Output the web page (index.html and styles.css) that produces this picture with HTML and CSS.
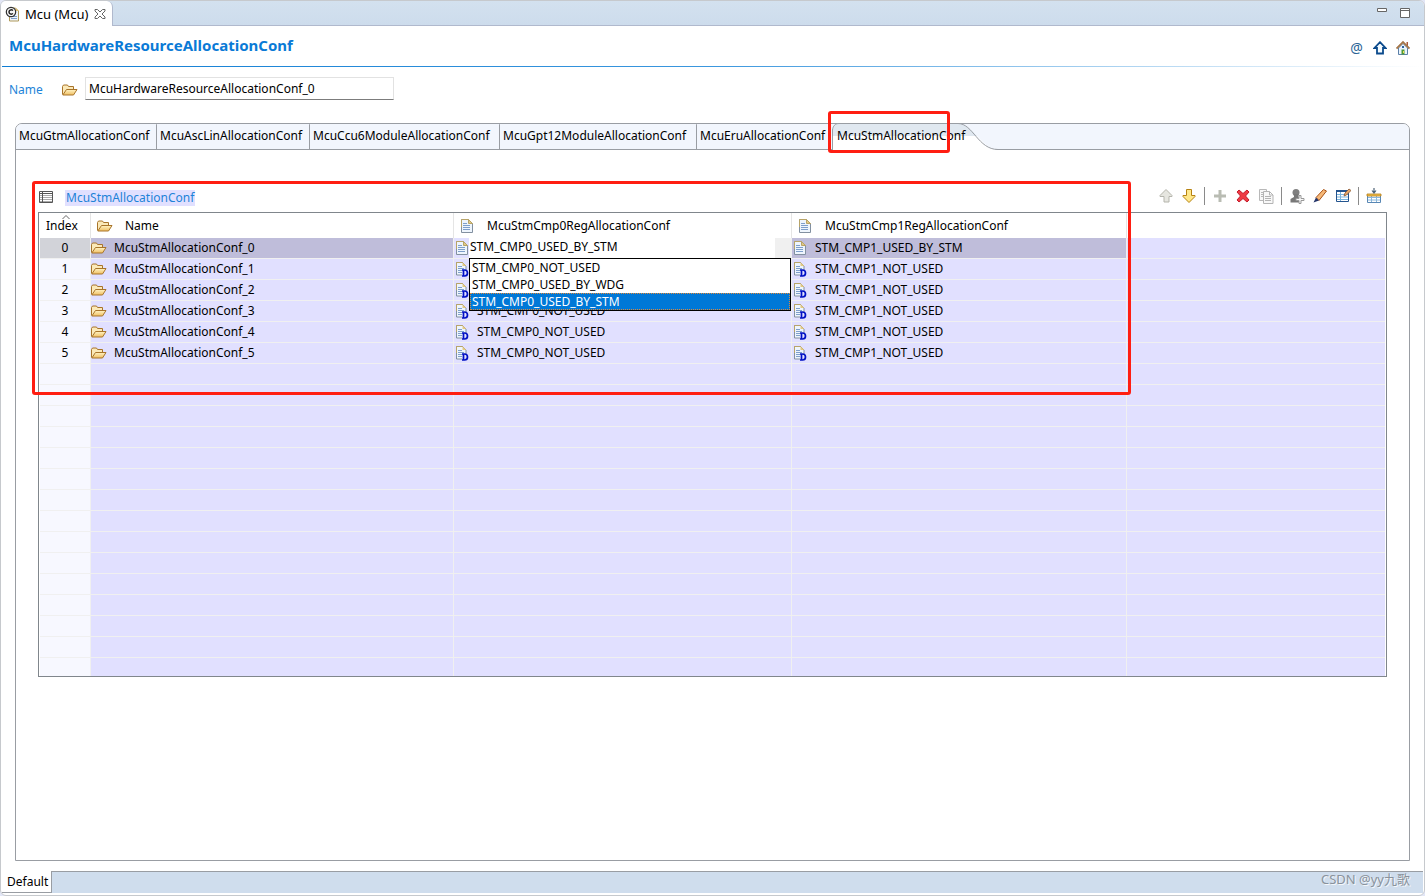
FILE: index.html
```html
<!DOCTYPE html>
<html lang="en">
<head>
<meta charset="utf-8">
<title>Mcu (Mcu)</title>
<link rel="stylesheet" href="styles.css">
</head>
<body>
<svg class="defs" aria-hidden="true">
  <defs>
    <linearGradient id="gold" x1="0" y1="0" x2="0" y2="1"><stop offset="0" stop-color="#fff3c4"/><stop offset="1" stop-color="#f0bf62"/></linearGradient>
    <symbol id="folder" viewBox="0 0 16 14">
      <path d="M.5 11.500V3.500l1-1.500h4l1 1.500h5v3" fill="#fbe9b8" stroke="#a8742a"/>
      <path d="M.8 12L4.500 6.500h10.500L11.500 12z" fill="url(#gold)" stroke="#a8742a"/>
    </symbol>
    <symbol id="doc" viewBox="0 0 12 14">
      <path d="M.5.5h7l4 4v9H.5z" fill="#eef5fd" stroke="#8290a0"/>
      <path d="M.5 8V.5h7l4 4" fill="none" stroke="#b8a468"/>
      <path d="M7.500.5v4h4z" fill="#e2c986" stroke="#b8a468"/>
      <path d="M2 4.500h4M2 6.500h7M2 8.500h7M2 10.500h7" stroke="#7e9fcb"/>
    </symbol>
    <symbol id="docd" viewBox="0 0 14 16">
      <path d="M.5.5h6l3.500 3.500v9H.5z" fill="#eef5fd" stroke="#8290a0"/>
      <path d="M.5 7V.5h6l3.500 3.500" fill="none" stroke="#b8a468"/>
      <path d="M6.500.5v3.500H10z" fill="#e2c986"/>
      <path d="M2 4.500h4M2 6.500h6M2 8.500h4M2 10.500h4" stroke="#7e9fcb"/>
      <path d="M6 8h2.500c2.300 0 3 1.300 3 3s-1 3-3 3H6M7.500 8v6" fill="#e2e1ff" stroke="#0010c4" stroke-width="1.700"/>
    </symbol>
  </defs>
</svg>
<div class="window">
  <header class="titlebar">
    <div class="editor-tab">
      <svg class="i16" viewBox="0 0 16 16"><path d="M4.500 5v10h9V5l-3-3h-6z" fill="#eef4fc" stroke="#b09a5a"/><path d="M10.500 2v3h3z" fill="#dfba64"/><path d="M6 10.500h6M6 12.500h6" stroke="#7e9fcb"/><circle cx="6" cy="6" r="4.700" fill="#f4f4f4" stroke="#333" stroke-width="1.200"/><path d="M8 4.500C6 3 4 4.500 4 6s2 3 4 1.500" fill="none" stroke="#222" stroke-width="1.500"/></svg>
      <span>Mcu (Mcu)</span>
      <button class="plain" aria-label="Close"><svg width="12" height="12" viewBox="0 0 12 12"><path d="M1 1.500h2.500L6 4l2.500-2.500H11V3L8 6l3 3v1.500H8.500L6 8l-2.500 2.500H1V9l3-3-3-3z" fill="#fff" stroke="#666"/></svg></button>
    </div>
    <div class="winctl">
      <button class="plain" aria-label="Minimize"><svg width="12" height="12" viewBox="0 0 12 12"><path d="M1.500 1.500h9v3h-9z" fill="#fff" stroke="#666"/></svg></button>
      <button class="plain" aria-label="Maximize"><svg width="12" height="12" viewBox="0 0 12 12"><path d="M1.500 1.500h9v9h-9zM1 3.500h10" fill="#fff" stroke="#666"/></svg></button>
    </div>
  </header>

  <div class="form-head">
    <h1>McuHardwareResourceAllocationConf</h1>
    <div class="form-tools">
      <button class="plain at" aria-label="Annotations">@</button>
      <button class="plain" aria-label="Up"><svg width="14" height="14" viewBox="0 0 14 14"><path d="M7 1.200L12.500 7H10v5.500H4V7H1.500z" fill="#f4fbff" stroke="#0b4a8c" stroke-width="1.800"/></svg></button>
      <button class="plain" aria-label="Home"><svg width="14" height="16" viewBox="0 0 14 16"><path d="M2.500 8v6.500h9V8L7 3.500z" fill="#eaf4fd" stroke="#5b7fa8"/><path d="M10.500 2h1.500v4h-1.500z" fill="#a8583a"/><path d="M.5 8.500L7 2l6.500 6.500" fill="none" stroke="#a5774a" stroke-width="1.800"/><path d="M5.500 9.500h3v5h-3z" fill="#4f9a38"/><path d="M6 6h2v2H6z" fill="#2e64a0"/><path d="M7 11h1v2H7z" fill="#f5dd50"/></svg></button>
    </div>
  </div>
  <div class="rule"></div>

  <div class="name-row">
    <label for="name">Name</label>
    <svg class="folder"><use href="#folder"/></svg>
    <input id="name" type="text" value="McuHardwareResourceAllocationConf_0">
  </div>

  <main class="folder-box">
    <nav class="tabs" role="tablist">
      <button class="tab t1" role="tab">McuGtmAllocationConf</button>
      <button class="tab t2" role="tab">McuAscLinAllocationConf</button>
      <button class="tab t3" role="tab">McuCcu6ModuleAllocationConf</button>
      <button class="tab t4" role="tab">McuGpt12ModuleAllocationConf</button>
      <button class="tab t5" role="tab">McuEruAllocationConf</button>
      <button class="tab active" role="tab" aria-selected="true">
        <svg class="tab-shape" width="166" height="27" viewBox="0 0 166 27"><path d="M0 27V7C1 3 3 1 7 .5H126C134 1 138 6 145 13H0z" fill="#e0e8f0"/><path d="M0 27V13h145c7 7 10 12 21 14z" fill="#fff"/><path d="M.5 27V7C1 3 3 .5 7 .5H126c15 0 20 26 40 26" fill="none" stroke="#999da3"/></svg>
        <span>McuStmAllocationConf</span>
      </button>
      <div class="mark mark-tab"></div>
    </nav>
    <section class="page">
      <div class="table-head">
        <svg width="14" height="14" viewBox="0 0 14 14"><path d="M.5 1.500h13v11H.5z" fill="#fff" stroke="#555"/><path d="M1 3.500h12M1 5.500h12M1 7.500h12M1 9.500h12M1 11.500h12" stroke="#aaa"/><path d="M0 3.500h14M3.500 2v10" stroke="#555"/></svg>
        <h2>McuStmAllocationConf</h2>
        <div class="tools">
          <button class="plain" aria-label="Move up"><svg class="i16" viewBox="0 0 16 16"><path d="M8 1.500l6 6v1h-3v5.500h-5V8.500H2v-1z" fill="#e6e6e0" stroke="#b5b5ac"/></svg></button>
          <button class="plain" aria-label="Move down"><svg class="i16" viewBox="0 0 16 16"><path d="M8 14.500l-6-6v-1h3.500v-6h5v6H14v1z" fill="#ffe88a" stroke="#b68212"/></svg></button>
          <i class="sep"></i>
          <button class="plain" aria-label="Add"><svg class="i16" viewBox="0 0 16 16"><path d="M6.500 2h3v4.500H14v3H9.500V14h-3V9.500H2v-3h4.500z" fill="#b9bcb3"/></svg></button>
          <button class="plain" aria-label="Delete"><svg class="i16" viewBox="0 0 16 16"><path d="M2 4l2-2 4 3.500L12 2l2 2-3.500 4L14 12l-2 2-4-3.500L4 14l-2-2 3.500-4z" fill="#ef3a44" stroke="#c41c2a"/></svg></button>
          <button class="plain" aria-label="Duplicate"><svg class="i16" viewBox="0 0 16 16"><path d="M1.500 1.500h7v11h-7zM3 4.500h4M3 6.500h4M3 8.500h4" fill="#f8f8f8" stroke="#b8b8b8"/><path d="M5.500 3.500h6l3.500 3.500v8.500H5.500zM11.500 3.500V7H15M7 8.500h6M7 10.500h6M7 12.500h6" fill="#f8f8f8" stroke="#b4b4b4"/></svg></button>
          <i class="sep"></i>
          <button class="plain" aria-label="Add user"><svg class="i16" viewBox="0 0 16 16"><circle cx="7" cy="4.500" r="3.500" fill="#808080"/><path d="M5 6h4.500v3l2 2v3.500H1.500V11L5 9z" fill="#787878"/><path d="M10 7.500h2v3h3v2h-3v3h-2v-3H7v-2h3z" fill="#f8f8f8" stroke="#999"/></svg></button>
          <button class="plain" aria-label="Edit"><svg class="i16" viewBox="0 0 16 16"><path d="M4 9.500L11.500 1.500l3 1.500-7.500 9.500z" fill="#f6b878" stroke="#a95418"/><path d="M4 9.500L1.500 14.500 7 12.500z" fill="#24356a"/></svg></button>
          <button class="plain" aria-label="Edit table"><svg class="i16" viewBox="0 0 16 16"><path d="M1 2h13v12H1z" fill="#fff"/><path d="M2 6.500h11M2 9h11M2 11.500h11M5.500 3v11" stroke="#79b3dc"/><path d="M1.500 3v10.500h12V3" fill="none" stroke="#24548e"/><path d="M1 3h13" stroke="#24548e" stroke-width="2"/><path d="M9 8l1-3 4-4 2 1.500-4.500 4.500z" fill="#e5a86b" stroke="#8a5630" stroke-width=".8"/></svg></button>
          <i class="sep"></i>
          <button class="plain" aria-label="Columns"><svg class="i16" viewBox="0 0 16 16"><path d="M1.500 6.500h13v8h-13z" fill="#fff" stroke="#5887b4"/><path d="M2 9.500h12M2 12h12M5.500 8v6M10.500 8v6" stroke="#8bb8dc"/><path d="M1 6h14v2H1z" fill="#f3c34c" stroke="#b57c18" stroke-width=".8"/><path d="M8 0v5M6 2.500L8 5l2-2.500" fill="none" stroke="#4d6276" stroke-width="1.200"/></svg></button>
        </div>
      </div>

      <div class="grid">
        <table>
          <colgroup><col class="c-index"><col class="c-name"><col class="c-cmp0"><col class="c-cmp1"><col></colgroup>
          <thead>
            <tr>
              <th class="idx"><svg class="sort" width="8" height="4" viewBox="0 0 8 4"><path d="M.5 4L4 .5 7.500 4" fill="none" stroke="#666"/></svg>Index</th>
              <th><div class="h"><svg class="folder"><use href="#folder"/></svg>Name</div></th>
              <th><div class="h"><svg class="doc"><use href="#doc"/></svg>McuStmCmp0RegAllocationConf</div></th>
              <th><div class="h"><svg class="doc"><use href="#doc"/></svg>McuStmCmp1RegAllocationConf</div></th>
              <th></th>
            </tr>
          </thead>
          <tbody>
            <tr class="selected">
              <td>0</td>
              <td><div class="c"><svg class="folder"><use href="#folder"/></svg>McuStmAllocationConf_0</div></td>
              <td><div class="c editing"><svg class="doc"><use href="#doc"/></svg>
                <select aria-label="McuStmCmp0RegAllocationConf"><option>STM_CMP0_NOT_USED</option><option>STM_CMP0_USED_BY_WDG</option><option selected>STM_CMP0_USED_BY_STM</option></select>
                <ul class="list" role="listbox"><li role="option">STM_CMP0_NOT_USED</li><li role="option">STM_CMP0_USED_BY_WDG</li><li role="option" aria-selected="true" class="on">STM_CMP0_USED_BY_STM</li></ul></div></td>
              <td><div class="c"><svg class="doc"><use href="#doc"/></svg>STM_CMP1_USED_BY_STM</div></td>
              <td></td>
            </tr>
            <tr><td>1</td><td><div class="c"><svg class="folder"><use href="#folder"/></svg>McuStmAllocationConf_1</div></td><td><div class="c"><svg class="docd"><use href="#docd"/></svg></div></td><td><div class="c"><svg class="docd"><use href="#docd"/></svg>STM_CMP1_NOT_USED</div></td><td></td></tr>
            <tr><td>2</td><td><div class="c"><svg class="folder"><use href="#folder"/></svg>McuStmAllocationConf_2</div></td><td><div class="c"><svg class="docd"><use href="#docd"/></svg></div></td><td><div class="c"><svg class="docd"><use href="#docd"/></svg>STM_CMP1_NOT_USED</div></td><td></td></tr>
            <tr><td>3</td><td><div class="c"><svg class="folder"><use href="#folder"/></svg>McuStmAllocationConf_3</div></td><td><div class="c"><svg class="docd"><use href="#docd"/></svg>STM_CMP0_NOT_USED</div></td><td><div class="c"><svg class="docd"><use href="#docd"/></svg>STM_CMP1_NOT_USED</div></td><td></td></tr>
            <tr><td>4</td><td><div class="c"><svg class="folder"><use href="#folder"/></svg>McuStmAllocationConf_4</div></td><td><div class="c"><svg class="docd"><use href="#docd"/></svg>STM_CMP0_NOT_USED</div></td><td><div class="c"><svg class="docd"><use href="#docd"/></svg>STM_CMP1_NOT_USED</div></td><td></td></tr>
            <tr><td>5</td><td><div class="c"><svg class="folder"><use href="#folder"/></svg>McuStmAllocationConf_5</div></td><td><div class="c"><svg class="docd"><use href="#docd"/></svg>STM_CMP0_NOT_USED</div></td><td><div class="c"><svg class="docd"><use href="#docd"/></svg>STM_CMP1_NOT_USED</div></td><td></td></tr>
            <tr><td></td><td></td><td></td><td></td><td></td></tr>
            <tr><td></td><td></td><td></td><td></td><td></td></tr>
            <tr><td></td><td></td><td></td><td></td><td></td></tr>
            <tr><td></td><td></td><td></td><td></td><td></td></tr>
            <tr><td></td><td></td><td></td><td></td><td></td></tr>
            <tr><td></td><td></td><td></td><td></td><td></td></tr>
            <tr><td></td><td></td><td></td><td></td><td></td></tr>
            <tr><td></td><td></td><td></td><td></td><td></td></tr>
            <tr><td></td><td></td><td></td><td></td><td></td></tr>
            <tr><td></td><td></td><td></td><td></td><td></td></tr>
            <tr><td></td><td></td><td></td><td></td><td></td></tr>
            <tr><td></td><td></td><td></td><td></td><td></td></tr>
            <tr><td></td><td></td><td></td><td></td><td></td></tr>
            <tr><td></td><td></td><td></td><td></td><td></td></tr>
            <tr class="last"><td></td><td></td><td></td><td></td><td></td></tr>
          </tbody>
        </table>
      </div>
      <div class="mark mark-table"></div>
    </section>
  </main>

  <footer class="bottom">
    <button class="page-tab">Default</button>
    <div class="bottom-fill"><span class="watermark">CSDN @yy九歌</span></div>
  </footer>
</div>
</body>
</html>
```
FILE: styles.css
```css
* { box-sizing: border-box; }
body {
  margin: 0;
  background: #e2e6f6;
  font: 12px/16px "Noto Sans", "Open Sans", "Noto Sans CJK SC", sans-serif;
  color: #000;
}
svg { display: block; flex: none; }
.defs { position: absolute; width: 0; height: 0; }
.i16 { width: 16px; height: 16px; }
.folder { width: 16px; height: 14px; }
.doc { width: 12px; height: 14px; }
.docd { width: 14px; height: 16px; }
button, input, select { font: inherit; color: inherit; }
.plain { border: 0; padding: 0; background: none; display: block; }

.window {
  height: 100vh;
  display: flex;
  flex-direction: column;
  background: #fff;
  border: 1px solid #c6c9cd;
  border-radius: 6px;
  padding: 0 1px 2px;
  overflow: hidden;
}
.titlebar {
  height: 25px;
  flex: none;
  display: flex;
  justify-content: space-between;
  margin: 0 -1px;
  background: linear-gradient(#d3e1ef, #cddcec);
  border-bottom: 1px solid #b0b9cd;
}
.editor-tab {
  width: 112px;
  height: 25px;
  display: flex;
  align-items: center;
  padding: 1px 0 0 4px;
  background: #fff;
  border-right: 1px solid #b0b9cd;
  border-top-right-radius: 6px;
  font-size: 13px;
  white-space: nowrap;
}
.editor-tab span { flex: none; width: 73px; padding-left: 4px; }
.winctl { display: flex; gap: 11px; padding: 6px 13px 0 0; align-items: flex-start; }

.form-head {
  flex: none;
  height: 40px;
  display: flex;
  justify-content: space-between;
  padding: 9px 13px 0 7px;
}
h1 { margin: 0; font-size: 15px; line-height: 20px; color: #0a7ad6; }
.form-tools { display: flex; align-items: center; gap: 9px; height: 26px; }
.at { color: #2a6496; width: 15px; font-size: 14px; }
.rule { flex: none; height: 1px; background: linear-gradient(to right, #0f7dd4, #3b97de 50%, #fff); }

.name-row { flex: none; display: flex; align-items: center; padding: 8px 7px 0; height: 34px; }
.name-row label { width: 53px; padding-top: 3px; color: #1d83d8; }
.name-row .folder { margin: 4px 7px 0 0; }
.name-row input {
  width: 309px;
  height: 23px;
  padding: 0 3px;
  border: 1px solid #e2e2e2;
  border-bottom-color: #7c7c7c;
}

.folder-box {
  flex: 1;
  min-height: 0;
  margin: 22px 13px 10px;
  display: flex;
  flex-direction: column;
  border: 1px solid #999da3;
  border-radius: 7px 7px 0 0;
}
.tabs {
  position: relative;
  flex: none;
  height: 26px;
  display: flex;
  background: #f2f6fd;
  border-bottom: 1px solid #999da3;
  border-radius: 6px 6px 0 0;
}
.tab {
  flex: none;
  height: 25px;
  padding: 0 0 1px 3px;
  border: 0;
  border-right: 1px solid #999da3;
  border-top-right-radius: 1px;
  background: none;
  text-align: left;
  white-space: nowrap;
}
.t1 { width: 141px; }
.t2 { width: 153px; }
.t3 { width: 190px; }
.t4 { width: 197px; }
.t5 { width: 135px; border-right: 0; }
.active { position: relative; width: 166px; border: 0; padding-left: 5px; }
.active span { position: relative; }
.tab-shape { position: absolute; left: 0; top: -1px; }
.mark { position: absolute; border: 3px solid #ff1e12; border-radius: 3px; pointer-events: none; }
.mark-tab { left: 812px; top: -13px; width: 122px; height: 42px; }

.page { position: relative; flex: 1; padding: 33px 22px 0; }
.mark-table { left: 16px; right: 278px; top: 31px; height: 214px; }
.table-head { height: 29px; display: flex; align-items: flex-start; padding: 7px 5px 0 1px; }
h2 {
  margin: 0 0 0 12px;
  padding: 0 1px;
  font-size: 12px;
  font-weight: normal;
  line-height: 16px;
  color: #1d83d8;
  background: #e1e0ff;
}
.tools { margin: -2px 0 0 auto; display: flex; align-items: center; gap: 7px; height: 16px; }
.sep { width: 1px; height: 18px; background: #8a8a8a; }

.grid { border: 1px solid #80868c; padding: 0 1px; }
table { width: 100%; table-layout: fixed; border-collapse: separate; border-spacing: 0; }
.c-index { width: 51px; }
.c-name { width: 363px; }
.c-cmp0 { width: 338px; }
.c-cmp1 { width: 335px; }
th { height: 25px; padding: 0; font-weight: normal; text-align: left; border-right: 1px solid #e5e5e5; }
th:last-child { border: 0; }
.idx { position: relative; padding-left: 6px; }
.sort { position: absolute; left: 22px; top: 2px; }
.h { display: flex; align-items: center; gap: 12px; padding-left: 6px; }
.h .doc { margin: 0 2px 0 1px; }
td {
  height: 21px;
  padding: 0;
  background: #e1e0ff;
  border-right: 1px solid #f0f0f0;
  border-bottom: 1px solid #f0f0f0;
}
td:first-child { background: #f7f8ff; text-align: center; }
td:last-child { border-right: 0; }
.last td { height: 18px; border-bottom: 0; }
.selected td { background: #bfbdda; }
.selected td:first-child { background: #d2d3d9; }
.selected td:last-child { background: #e1e0ff; }
.c { display: flex; align-items: center; height: 20px; white-space: nowrap; }
.c .folder { margin-right: 7px; }
.c .doc { margin: 0 9px 0 2px; }
.c .docd { margin: 2px 7px 0 2px; }
.editing { position: relative; background: #e1e0ff; }
.editing .doc { margin-right: 1px; }
.editing select {
  flex: 1;
  height: 20px;
  padding: 0 0 3px 1px;
  border: 0;
  border-right: 16px solid #f0f0f0;
  border-radius: 0;
  appearance: none;
  background: #fff;
}
.list {
  position: absolute;
  z-index: 1;
  left: 15px;
  right: 0;
  top: 20px;
  margin: 0;
  padding: 0;
  list-style: none;
  background: #fff;
  border: 1px solid #000;
}
.list li { height: 17px; padding-left: 2px; line-height: 17px; }
.list .on { background: #0078d7; color: #fff; outline: 1px dotted #e08838; outline-offset: -1px; }

.bottom { flex: none; display: flex; height: 22px; }
.page-tab {
  width: 50px;
  padding: 0 0 0 5px;
  border: 0;
  border-right: 1px solid #999da3;
  border-bottom: 1px solid #999da3;
  background: #fff;
  text-align: left;
}
.bottom-fill {
  flex: 1;
  display: flex;
  justify-content: flex-end;
  padding-right: 13px;
  background: #cfdded;
  border-top: 1px solid #999da3;
}
.watermark { color: #8a929c; font-size: 13px; line-height: 15px; text-shadow: 1px 1px 0 #f4f7fa; }
```
